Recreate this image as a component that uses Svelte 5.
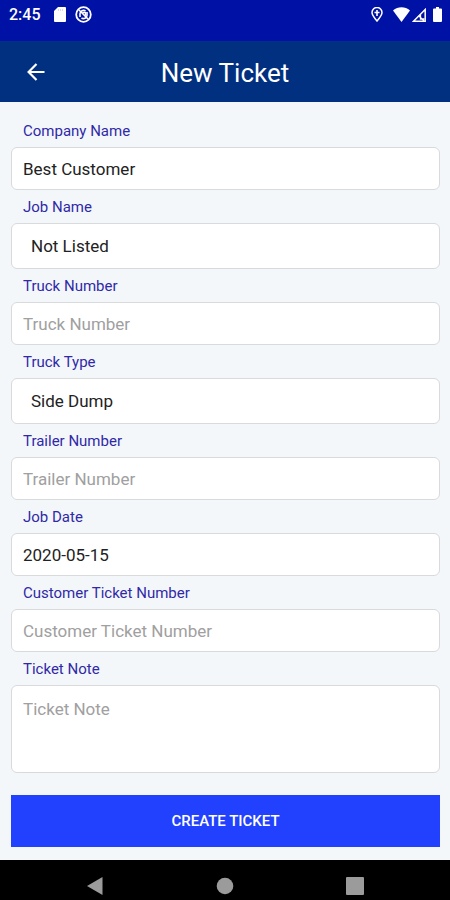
<script lang="ts">
  type Field = {
    id: string;
    label: string;
    kind: "text" | "select" | "note";
    value: string;
    options?: string[];
  };

  let fields = $state<Field[]>([
    { id: "company", label: "Company Name", kind: "text", value: "Best Customer" },
    { id: "job", label: "Job Name", kind: "select", value: "Not Listed", options: ["Not Listed"] },
    { id: "truck", label: "Truck Number", kind: "text", value: "" },
    { id: "truck-type", label: "Truck Type", kind: "select", value: "Side Dump", options: ["Side Dump"] },
    { id: "trailer", label: "Trailer Number", kind: "text", value: "" },
    { id: "date", label: "Job Date", kind: "text", value: "2020-05-15" },
    { id: "customer-ticket", label: "Customer Ticket Number", kind: "text", value: "" },
    { id: "note", label: "Ticket Note", kind: "note", value: "" },
  ]);

  function submit(e: SubmitEvent) {
    e.preventDefault();
  }
</script>

<div class="screen">
  <div class="status">
    <span class="time">2:45</span>
    <svg class="sd" width="12" height="15" viewBox="0 0 12 15">
      <path d="M4 0h7a1 1 0 0 1 1 1v13a1 1 0 0 1-1 1H1a1 1 0 0 1-1-1V4z" fill="#fff" />
      <path d="M4.500 2v2M6.500 2v2M8.500 2v2" stroke="#d5d8f6" stroke-width="1" />
    </svg>
    <svg class="sync" width="17" height="17" viewBox="0 0 17 17" fill="none" stroke="#fff">
      <circle cx="8.500" cy="8.500" r="7.300" stroke-width="1.800" />
      <path d="M5 11V7.500a3.500 3.500 0 0 1 5.500-2.500M12 6v3.500a3.500 3.500 0 0 1-5.500 2.500" stroke-width="1.600" />
      <path d="M4 4l9 9M7.500 6.500h3v3" stroke-width="1.500" />
    </svg>
    <span class="spacer"></span>
    <svg class="pin" width="12" height="15" viewBox="0 0 12 15" fill="none" stroke="#fff">
      <path d="M6 14C3 10.500 1 8 1 5.500a5 5 0 0 1 10 0C11 8 9 10.500 6 14z" stroke-width="1.500" />
      <path d="M6 3v6M3.500 5.500h5" stroke-width="1.600" />
    </svg>
    <svg class="wifi" width="17" height="15" viewBox="0 0 17 15">
      <path d="M0 3.500C5-.900 12-.900 17 3.500L8.500 15z" fill="#fff" />
    </svg>
    <svg class="cell" width="14" height="14" viewBox="0 0 14 14" fill="none" stroke="#fff">
      <path d="M1.500 13.200L13.200 1.500v11.700z" stroke-width="1.500" />
      <path d="M7 8l5 5M8.500 6.500v4.500h4" stroke-width="1.300" />
    </svg>
    <svg class="battery" width="9" height="15" viewBox="0 0 9 15">
      <path d="M3 0h3v1.500h2a1 1 0 0 1 1 1V14a1 1 0 0 1-1 1H1a1 1 0 0 1-1-1V2.500a1 1 0 0 1 1-1h2z" fill="#fff" />
    </svg>
  </div>

  <header>
    <button class="back" type="button" aria-label="Back">
      <svg width="18" height="18" viewBox="0 0 18 18" fill="none" stroke="#fff" stroke-width="2.200">
        <path d="M17.500 9H1.800M9.500 1L1.600 9l7.900 8" />
      </svg>
    </button>
    <h1>New Ticket</h1>
  </header>

  <form onsubmit={submit}>
    {#each fields as field (field.id)}
      <label for={field.id}>{field.label}</label>
      {#if field.kind === "select"}
        <select id={field.id} bind:value={field.value}>
          {#each field.options ?? [] as option}
            <option>{option}</option>
          {/each}
        </select>
      {:else if field.kind === "note"}
        <textarea id={field.id} placeholder={field.label} bind:value={field.value}></textarea>
      {:else}
        <input id={field.id} type="text" placeholder={field.label} bind:value={field.value} />
      {/if}
    {/each}
    <button class="create" type="submit">CREATE TICKET</button>
  </form>

  <nav>
    <button type="button" aria-label="System back">
      <svg width="18" height="20" viewBox="0 0 18 20"><path d="M16.500 1v18L1 10z" fill="#9b9b9b" /></svg>
    </button>
    <button type="button" aria-label="Home">
      <svg width="18" height="18" viewBox="0 0 18 18"><circle cx="9" cy="9" r="8.300" fill="#9b9b9b" /></svg>
    </button>
    <button type="button" aria-label="Recent apps">
      <svg width="18" height="18" viewBox="0 0 18 18"><rect width="18" height="18" rx="1" fill="#9b9b9b" /></svg>
    </button>
  </nav>
</div>

<style>
  :global(body) {
    margin: 0;
    background: #f3f7fa;
  }

  .screen {
    display: flex;
    flex-direction: column;
    min-height: 100vh;
    background: #f3f7fa;
    font-family: Roboto, "Liberation Sans", sans-serif;
  }

  button {
    border: 0;
    padding: 0;
    background: none;
    font-family: inherit;
    cursor: pointer;
  }

  svg {
    display: block;
  }

  .status {
    display: flex;
    align-items: center;
    height: 29px;
    padding: 0 8px 12px 9px;
    background: #0011a6;
  }

  .time {
    color: #fff;
    font-size: 16px;
    font-weight: 500;
    line-height: 20px;
  }

  .sd {
    margin-left: 13px;
  }

  .sync {
    margin-left: 9px;
  }

  .spacer {
    flex: 1;
  }

  .wifi {
    margin-left: 10px;
  }

  .cell {
    margin-left: 2px;
  }

  .battery {
    margin-left: 7px;
  }

  header {
    display: grid;
    grid-template-columns: 72px 1fr 72px;
    align-items: center;
    height: 61px;
    background: #00307f;
  }

  .back {
    display: flex;
    align-items: center;
    justify-content: center;
    height: 48px;
  }

  h1 {
    margin: 0;
    padding-top: 2px;
    color: #fff;
    font-size: 26px;
    font-weight: 400;
    line-height: 32px;
    text-align: center;
  }

  form {
    display: flex;
    flex: 1;
    flex-direction: column;
    padding: 12px 10px 12px 11px;
  }

  label {
    padding: 1px 0 0 12px;
    color: #3029a8;
    font-size: 15px;
    line-height: 32px;
  }

  input,
  select,
  textarea {
    box-sizing: border-box;
    width: 100%;
    height: 43px;
    margin: 0;
    padding: 0 11px;
    border: 1px solid #d9dadc;
    border-radius: 6px;
    outline: none;
    background: #fff;
    color: #222;
    font-family: inherit;
    font-size: 17px;
  }

  select {
    appearance: none;
    height: 46px;
    padding: 0 19px;
  }

  textarea {
    height: 88px;
    padding: 12px 11px;
    line-height: 22px;
    resize: none;
  }

  ::placeholder {
    color: #a0a0a0;
    opacity: 1;
  }

  .create {
    height: 52px;
    margin-top: 22px;
    background: #2141ff;
    color: #fff;
    font-size: 15px;
    font-weight: 500;
  }

  nav {
    display: grid;
    grid-template-columns: repeat(3, 130px);
    justify-content: center;
    align-items: center;
    height: 40px;
    padding-top: 12px;
    box-sizing: border-box;
    background: #000;
  }

  nav button {
    display: flex;
    justify-content: center;
  }
</style>
